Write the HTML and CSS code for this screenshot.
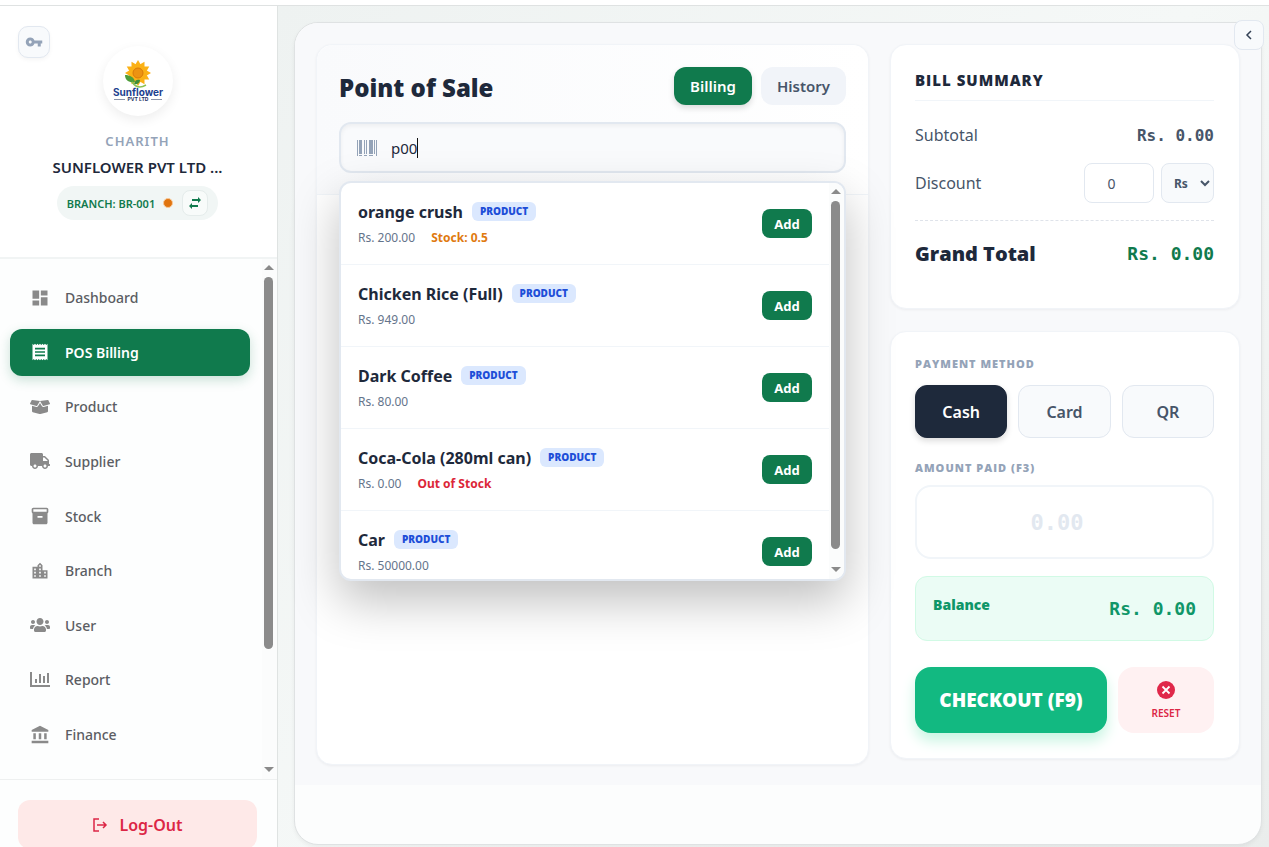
FILE: index.html
```html
<!DOCTYPE html>
<html lang="en">
<head>
    <meta charset="UTF-8">
    <meta name="viewport" content="width=device-width, initial-scale=1.0">
    <title>POS Billing</title>
    <link rel="stylesheet" href="styles.css">
</head>
<body>
    <div class="topbar"></div>
    <div class="layout">
        <aside class="sidebar">
            <div class="profile">
                <button class="key-button" aria-label="Change password">
                    <svg viewBox="0 0 24 24" width="18" height="18"><path d="M12.65 10A5.99 5.99 0 0 0 7 6c-3.31 0-6 2.69-6 6s2.69 6 6 6a5.99 5.99 0 0 0 5.65-4H17v4h4v-4h2v-4H12.65zM7 14c-1.1 0-2-.9-2-2s.9-2 2-2 2 .9 2 2-.9 2-2 2z"/></svg>
                </button>
                <div class="logo">
                    <svg viewBox="0 0 70 70" width="70" height="70">
                        <g fill="#fbb116">
                            <path id="petal" d="M35 29L31.500 20L35 14L38.500 20Z"/>
                            <use href="#petal" transform="rotate(30 35 27)"/>
                            <use href="#petal" transform="rotate(60 35 27)"/>
                            <use href="#petal" transform="rotate(90 35 27)"/>
                            <use href="#petal" transform="rotate(120 35 27)"/>
                            <use href="#petal" transform="rotate(150 35 27)"/>
                            <use href="#petal" transform="rotate(180 35 27)"/>
                            <use href="#petal" transform="rotate(210 35 27)"/>
                            <use href="#petal" transform="rotate(240 35 27)"/>
                            <use href="#petal" transform="rotate(270 35 27)"/>
                            <use href="#petal" transform="rotate(300 35 27)"/>
                            <use href="#petal" transform="rotate(330 35 27)"/>
                        </g>
                        <circle cx="35" cy="27" r="8" fill="#fbb116"/>
                        <circle cx="35" cy="27" r="5" fill="#ec9312" stroke="#d97a0a"/>
                        <path d="M22 29c5 0 9 2 10 7c-5 1-10-1-10-7z" fill="#4f9d3a"/>
                        <path d="M31 38c1-4 3-5 6-4c0 3-3 5-6 4z" fill="#3d8d3a"/>
                        <path d="M29 36c4 6 9 6 14 3" fill="none" stroke="#8cc152" stroke-width="1.500"/>
                        <text x="35" y="50" text-anchor="middle" class="logo-name">Sunflower</text>
                        <path d="M11 53.500h11M48 53.500h11" stroke="#8a93a8"/>
                        <text x="35" y="55" text-anchor="middle" class="logo-sub">PVT LTD</text>
                    </svg>
                </div>
                <div class="user-name">CHARITH</div>
                <div class="company">SUNFLOWER PVT LTD ...</div>
                <div class="branch-pill">
                    <span>BRANCH: BR-001</span>
                    <i class="dot"></i>
                    <button class="swap-button" aria-label="Switch branch">
                        <svg viewBox="0 0 14 14" width="14" height="14"><path d="M10 1l3 3-3 3V5H4V3h6zM4 7L1 10l3 3v-2h6V9H4z"/></svg>
                    </button>
                </div>
            </div>
            <div class="nav-wrap">
                <nav class="nav">
                    <a href="#"><svg viewBox="0 0 24 24" width="20" height="20"><path d="M3 13h8V3H3v10zm0 8h8v-6H3v6zm10 0h8V11h-8v10zm0-18v6h8V3h-8z"/></svg>Dashboard</a>
                    <a href="#" class="active"><svg viewBox="0 0 24 24" width="20" height="20"><path d="M18 17H6v-2h12v2zm0-4H6v-2h12v2zm0-4H6V7h12v2zM3 22l1.500-1.500L6 22l1.500-1.500L9 22l1.500-1.500L12 22l1.500-1.500L15 22l1.500-1.500L18 22l1.500-1.500L21 22V2l-1.500 1.500L18 2l-1.500 1.500L15 2l-1.500 1.500L12 2l-1.500 1.500L9 2 7.500 3.500 6 2 4.500 3.500 3 2v20z"/></svg>POS Billing</a>
                    <a href="#"><svg viewBox="0 0 640 512" width="20" height="16"><path d="M425.700 256c-16.900 0-32.800-9-41.400-23.400L320 126l-64.200 106.600c-8.700 14.500-24.600 23.500-41.500 23.500-4.500 0-9-.6-13.300-1.900L64 215v178c0 14.700 10 27.500 24.200 31l216.200 54.100c10.200 2.500 20.900 2.500 31 0L551.800 424c14.200-3.600 24.200-16.400 24.200-31V215l-137 39.100c-4.300 1.300-8.800 1.900-13.300 1.900zm212.600-112.200L586.800 41c-3.100-6.200-9.800-9.800-16.700-8.900L320 64l91.700 152.100c3.800 6.300 11.400 9.300 18.500 7.300l197.900-56.500c9.900-2.900 14.700-13.900 10.200-23.100zM53.200 41L1.700 143.800c-4.600 9.200.3 20.200 10.100 23l197.900 56.500c7.100 2 14.700-1 18.500-7.300L320 64 69.800 32.100c-6.900-.8-13.500 2.700-16.600 8.900z"/></svg>Product</a>
                    <a href="#"><svg viewBox="0 0 640 512" width="20" height="16"><path d="M624 352h-16V243.900c0-12.700-5.100-24.900-14.100-33.900L494 110.100c-9-9-21.200-14.100-33.900-14.100H416V48c0-26.500-21.500-48-48-48H48C21.500 0 0 21.500 0 48v320c0 26.500 21.500 48 48 48h16c0 53 43 96 96 96s96-43 96-96h128c0 53 43 96 96 96s96-43 96-96h48c8.800 0 16-7.200 16-16v-32c0-8.800-7.200-16-16-16zM160 464c-26.500 0-48-21.500-48-48s21.500-48 48-48 48 21.500 48 48-21.500 48-48 48zm320 0c-26.500 0-48-21.500-48-48s21.500-48 48-48 48 21.500 48 48-21.500 48-48 48zm80-208H416V144h44.100l99.900 99.900V256z"/></svg>Supplier</a>
                    <a href="#"><svg viewBox="0 0 24 24" width="20" height="20"><path fill-rule="evenodd" d="M4 2h16c1 0 2 1 2 2v3c0 1-.5 1.500-1 2v11c0 1-1 2-2 2H5c-1 0-2-1-2-2V9c-.5-.5-1-1-1-2V4c0-1 1-2 2-2zm0 2v3h16V4H4zm5 8v2h6v-2H9z"/></svg>Stock</a>
                    <a href="#"><svg viewBox="0 0 24 24" width="20" height="20"><path d="M15 11V5l-3-3-3 3v2H3v14h18V11h-6zm-8 8H5v-2h2v2zm0-4H5v-2h2v2zm0-4H5V9h2v2zm6 8h-2v-2h2v2zm0-4h-2v-2h2v2zm0-4h-2V9h2v2zm0-4h-2V5h2v2zm6 12h-2v-2h2v2zm0-4h-2v-2h2v2z"/></svg>Branch</a>
                    <a href="#"><svg viewBox="0 0 640 512" width="20" height="16"><path d="M96 224c35.300 0 64-28.700 64-64s-28.700-64-64-64-64 28.700-64 64 28.700 64 64 64zm448 0c35.300 0 64-28.700 64-64s-28.700-64-64-64-64 28.700-64 64 28.700 64 64 64zm32 32h-64c-17.600 0-33.500 7.100-45.100 18.600 40.300 22.100 68.900 62 75.100 109.400h66c17.700 0 32-14.300 32-32v-32c0-35.300-28.700-64-64-64zm-256 0c61.900 0 112-50.100 112-112S381.900 32 320 32 208 82.100 208 144s50.100 112 112 112zm76.800 32h-8.300c-20.800 10-43.900 16-68.500 16s-47.600-6-68.500-16h-8.300C179.600 288 128 339.600 128 403.200V432c0 26.500 21.500 48 48 48h288c26.500 0 48-21.500 48-48v-28.800c0-63.600-51.600-115.200-115.200-115.200zm-223.700-13.400C161.500 263.100 145.600 256 128 256H64c-35.300 0-64 28.700-64 64v32c0 17.700 14.300 32 32 32h65.900c6.300-47.400 34.900-87.300 75.200-109.400z"/></svg>User</a>
                    <a href="#"><svg viewBox="0 0 20 20" width="20" height="20"><path d="M0 2h2v13h18v2H0zM5 9h2v4H5zM9 4h2v9H9zM13 6h2v7h-2zM17 3h2v10h-2z"/></svg>Report</a>
                    <a href="#"><svg viewBox="0 0 24 24" width="20" height="20"><path d="M4 10v7h3v-7H4zm6.500 0v7h3v-7h-3zM2 22h20v-3H2v3zM17 10v7h3v-7h-3zM12 1L2 6v2h20V6L12 1z"/></svg>Finance</a>
                </nav>
                <div class="scrollbar">
                    <i class="arrow-up"></i>
                    <div class="track"><div class="thumb"></div></div>
                    <i class="arrow-down"></i>
                </div>
            </div>
            <div class="sidebar-footer">
                <button class="logout">
                    <svg viewBox="0 0 16 16" width="16" height="16" fill="none" stroke="#dc2645" stroke-width="1.500"><path d="M7 2H2v12h5M5 8h9M11 5l3 3-3 3"/></svg>
                    Log-Out
                </button>
            </div>
        </aside>

        <main class="main">
            <div class="panel">
                <button class="collapse" aria-label="Collapse">
                    <svg viewBox="0 0 8 10" width="8" height="10" fill="none" stroke="#334155" stroke-width="1.500"><path d="M6 1L2 5l4 4"/></svg>
                </button>
                <div class="pos">
                    <section class="card sale">
                        <header class="sale-header">
                            <div class="title-row">
                                <h1>Point of Sale</h1>
                                <div class="tabs">
                                    <button class="tab tab-active">Billing</button>
                                    <button class="tab">History</button>
                                </div>
                            </div>
                            <div class="search">
                                <svg viewBox="0 0 20 16" width="20" height="16" fill="#94a3b8"><path d="M0 0h1v16H0zM2 0h3v14H2zM7 0h1v14H7zM9 0h1v14H9zM12 0h4v14h-4zM17 0h1v14h-1zM19 0h1v16h-1zM2 15h3v1H2zM7 15h3v1H7zM12 15h4v1h-4z"/></svg>
                                <input type="text" value="p00" aria-label="Search products">
                                <i class="caret"></i>
                                <div class="results">
                                    <div class="result-list">
                                        <div class="result">
                                            <div>
                                                <div class="name">orange crush <span class="badge">PRODUCT</span></div>
                                                <div class="price">Rs. 200.00 <b class="low">Stock: 0.5</b></div>
                                            </div>
                                            <button class="add">Add</button>
                                        </div>
                                        <div class="result">
                                            <div>
                                                <div class="name">Chicken Rice (Full) <span class="badge">PRODUCT</span></div>
                                                <div class="price">Rs. 949.00</div>
                                            </div>
                                            <button class="add">Add</button>
                                        </div>
                                        <div class="result">
                                            <div>
                                                <div class="name">Dark Coffee <span class="badge">PRODUCT</span></div>
                                                <div class="price">Rs. 80.00</div>
                                            </div>
                                            <button class="add">Add</button>
                                        </div>
                                        <div class="result">
                                            <div>
                                                <div class="name">Coca-Cola (280ml can) <span class="badge">PRODUCT</span></div>
                                                <div class="price">Rs. 0.00 <b class="out">Out of Stock</b></div>
                                            </div>
                                            <button class="add">Add</button>
                                        </div>
                                        <div class="result">
                                            <div>
                                                <div class="name">Car <span class="badge">PRODUCT</span></div>
                                                <div class="price">Rs. 50000.00</div>
                                            </div>
                                            <button class="add">Add</button>
                                        </div>
                                    </div>
                                    <div class="scrollbar">
                                        <i class="arrow-up"></i>
                                        <div class="track"><div class="thumb thumb-long"></div></div>
                                        <i class="arrow-down"></i>
                                    </div>
                                </div>
                            </div>
                        </header>
                    </section>

                    <div class="side">
                        <section class="card summary">
                            <h2>BILL SUMMARY</h2>
                            <div class="line">
                                <span>Subtotal</span>
                                <span class="mono">Rs. 0.00</span>
                            </div>
                            <div class="line discount">
                                <label for="discount">Discount</label>
                                <div class="discount-fields">
                                    <input id="discount" type="number" value="0">
                                    <select aria-label="Discount type">
                                        <option>Rs</option>
                                        <option>%</option>
                                    </select>
                                </div>
                            </div>
                            <div class="line total">
                                <span>Grand Total</span>
                                <span class="mono">Rs. 0.00</span>
                            </div>
                        </section>

                        <section class="card payment">
                            <h3>PAYMENT METHOD</h3>
                            <div class="methods">
                                <button class="method method-active">Cash</button>
                                <button class="method">Card</button>
                                <button class="method">QR</button>
                            </div>
                            <label class="amount-label" for="amount">AMOUNT PAID (F3)</label>
                            <input id="amount" class="amount mono" type="number" placeholder="0.00">
                            <div class="balance">
                                <b>Balance</b>
                                <span class="mono">Rs. 0.00</span>
                            </div>
                            <div class="actions">
                                <button class="checkout">CHECKOUT (F9)</button>
                                <button class="reset">
                                    <svg viewBox="0 0 18 18" width="18" height="18"><circle cx="9" cy="9" r="9" fill="#e0284a"/><path d="M5.500 5.500l7 7M12.500 5.500l-7 7" stroke="#fff" stroke-width="1.800"/></svg>
                                    RESET
                                </button>
                            </div>
                        </section>
                    </div>
                </div>
            </div>
        </main>
    </div>
</body>
</html>
```
FILE: styles.css
```css
* {
    box-sizing: border-box;
}
body {
    margin: 0;
    height: 100vh;
    display: flex;
    flex-direction: column;
    overflow: hidden;
    font-family: "Noto Sans", "Open Sans", sans-serif;
    color: #1e293b;
    background: #fff;
}
button, input, select {
    font-family: inherit;
    margin: 0;
}
button {
    border: 0;
    padding: 0;
    cursor: pointer;
}
svg {
    flex-shrink: 0;
}
.mono {
    font-family: "DejaVu Sans Mono", monospace;
}
.topbar {
    height: 6px;
    flex-shrink: 0;
    border-bottom: 1px solid #dfe2e2;
}
.layout {
    flex: 1;
    min-height: 0;
    display: flex;
}

/* Sidebar */
.sidebar {
    width: 278px;
    flex-shrink: 0;
    display: flex;
    flex-direction: column;
    border-right: 1px solid #dfe3e2;
    background: #fdfefe;
}
.profile {
    position: relative;
    height: 253px;
    flex-shrink: 0;
    display: flex;
    flex-direction: column;
    align-items: center;
    padding: 40px 20px 0 18px;
    border-bottom: 2px solid #f1f4f4;
    background: #fff;
}
.key-button {
    position: absolute;
    top: 20px;
    left: 18px;
    width: 32px;
    height: 32px;
    display: grid;
    place-items: center;
    border: 1px solid #e2e8f0;
    border-radius: 10px;
    background: #f8fafc;
    fill: #94a3b8;
    box-shadow: 0 2px 4px rgba(0, 0, 0, 0.04);
}
.logo {
    width: 70px;
    height: 70px;
    border-radius: 50%;
    background: #fff;
    box-shadow: 0 4px 12px rgba(0, 0, 0, 0.07);
}
.logo-name {
    font: bold 10px Inter, sans-serif;
    fill: #1d3f8f;
}
.logo-sub {
    font: bold 5px Inter, sans-serif;
    fill: #1d2f5f;
}
.user-name {
    margin-top: 15px;
    font-size: 13px;
    line-height: 20px;
    font-weight: 600;
    letter-spacing: 1px;
    color: #94a3b8;
}
.company {
    margin-top: 4px;
    font-size: 15px;
    line-height: 24px;
    font-weight: 600;
}
.branch-pill {
    display: flex;
    align-items: center;
    height: 34px;
    margin-top: 7px;
    padding: 0 10px;
    border-radius: 17px;
    background: #f1f6f5;
    font-size: 11px;
    font-weight: 600;
    color: #107a4d;
}
.dot {
    width: 10px;
    height: 10px;
    margin: 0 9px 0 8px;
    border: 1px solid #f9c999;
    border-radius: 50%;
    background: #e0740f;
}
.swap-button {
    width: 26px;
    height: 26px;
    display: grid;
    place-items: center;
    border: 1px solid #e5eceb;
    border-radius: 8px;
    background: #f8fbfa;
    fill: #107a4d;
}
.nav-wrap {
    flex: 1;
    min-height: 0;
    display: flex;
}
.nav {
    flex: 1;
    display: flex;
    flex-direction: column;
    justify-content: space-between;
    padding: 15px 12px 21px 10px;
}
.nav a {
    display: flex;
    align-items: center;
    gap: 15px;
    height: 47px;
    padding: 0 20px;
    border-radius: 12px;
    font-size: 14px;
    font-weight: 500;
    color: #5b5d63;
    fill: #8a8a8a;
    text-decoration: none;
}
.nav .active {
    background: #107a4d;
    color: #fff;
    fill: #fff;
    font-weight: 600;
    box-shadow: 0 4px 12px rgba(16, 122, 77, 0.22);
}
.scrollbar {
    width: 15px;
    display: flex;
    flex-direction: column;
    align-items: center;
    padding: 6px 2px 7px 0;
    background: #fbfcfc;
}
.arrow-up, .arrow-down {
    border: 5px solid transparent;
    border-top-width: 0;
    border-bottom: 5px solid #8a8a8a;
}
.arrow-down {
    transform: rotate(180deg);
}
.track {
    flex: 1;
    width: 9px;
    margin: 7px 0;
}
.thumb {
    height: 77%;
    border-radius: 5px;
    background: #8b8b8b;
}
.thumb-long {
    height: 97%;
}
.sidebar-footer {
    flex-shrink: 0;
    height: 68px;
    padding: 20px 20px 0 18px;
    border-top: 1px solid #eef0f0;
    overflow: hidden;
}
.logout {
    width: 100%;
    height: 49px;
    display: flex;
    align-items: center;
    justify-content: center;
    gap: 11px;
    border-radius: 12px;
    background: #fee9e8;
    color: #dc2645;
    font-size: 16px;
    font-weight: 600;
}

/* Main panel */
.main {
    flex: 1;
    min-width: 0;
    padding: 16px 7px 2px 16px;
    background: linear-gradient(135deg, #eef2f1, #f5f8f7 50%, #eaedec);
}
.panel {
    position: relative;
    height: 100%;
    border: 1px solid #dfe2e3;
    border-radius: 24px;
    background: #fcfdfd;
    box-shadow: 0 2px 4px rgba(0, 0, 0, 0.05);
}
.collapse {
    position: absolute;
    top: -3px;
    right: -3px;
    width: 30px;
    height: 30px;
    display: grid;
    place-items: center;
    border: 1px solid #e2e8f0;
    border-radius: 8px;
    background: #f8fafc;
}
.pos {
    display: grid;
    grid-template-columns: 1fr 350px;
    align-items: start;
    gap: 21px;
    padding: 21px 21px 20px;
    border-radius: 23px 23px 0 0;
    background: #f8f9fb;
}
.card {
    border: 1px solid #f1f4f8;
    border-radius: 16px;
    background: #fff;
    box-shadow: 0 1px 3px rgba(15, 23, 42, 0.05);
}
.sale {
    min-height: 721px;
}
.sale-header {
    padding: 22px 22px 21px;
    border-bottom: 1px solid #f1f5f9;
    border-radius: 16px 16px 0 0;
    background: linear-gradient(90deg, #f9fafc, #fff);
}
.title-row {
    display: flex;
    align-items: flex-start;
    justify-content: space-between;
    margin-bottom: 13px;
}
h1, h2, h3, .amount-label, .total, .badge, .checkout, .balance b {
    font-family: "Open Sans", "Noto Sans", sans-serif;
    font-weight: 800;
}
h1 {
    margin: 0;
    font-size: 24px;
    line-height: 42px;
}
.tabs {
    display: flex;
    gap: 9px;
}
.tab {
    height: 38px;
    padding: 0 16px;
    border-radius: 12px;
    background: #f1f4f9;
    color: #475569;
    font-size: 15px;
    font-weight: 600;
}
.tab-active {
    background: #107a4d;
    color: #fff;
    box-shadow: 0 3px 6px rgba(0, 0, 0, 0.14);
}
.search {
    position: relative;
    display: flex;
    align-items: center;
    height: 51px;
    padding-left: 16px;
    border: 2px solid #e2e8f0;
    border-radius: 12px;
    background: #f9fafc;
    box-shadow: inset 0 2px 4px rgba(0, 0, 0, 0.05);
}
.search input {
    field-sizing: content;
    margin-left: 14px;
    padding: 0;
    border: 0;
    outline: 0;
    background: none;
    font-size: 15px;
    color: #1e293b;
}
.caret {
    width: 1px;
    height: 20px;
    background: #111;
}

/* Search results */
.results {
    position: absolute;
    top: 57px;
    left: -2px;
    right: -2px;
    z-index: 5;
    height: 400px;
    display: flex;
    overflow: hidden;
    border: 2px solid #e2e8f0;
    border-radius: 12px;
    background: #fff;
    box-shadow: 0 20px 48px rgba(0, 0, 0, 0.25);
}
.result-list {
    flex: 1;
}
.result {
    display: flex;
    align-items: center;
    justify-content: space-between;
    height: 82px;
    padding: 0 17px;
    border-bottom: 1px solid #f1f5f9;
}
.name {
    display: flex;
    align-items: center;
    gap: 9px;
    font-size: 16px;
    line-height: 28px;
    font-weight: 700;
}
.badge {
    padding: 0 8px;
    border-radius: 6px;
    background: #dbe8fe;
    color: #1d4ed8;
    font-size: 10px;
    line-height: 19px;
}
.price {
    font-size: 12px;
    line-height: 24px;
    color: #64748b;
}
.price b {
    margin-left: 13px;
    font-weight: 700;
}
.low {
    color: #e07a10;
}
.out {
    color: #dc2638;
}
.add {
    width: 50px;
    height: 29px;
    border-radius: 8px;
    background: #107a4d;
    color: #fff;
    font-size: 13px;
    font-weight: 700;
}

/* Bill summary */
.side {
    display: flex;
    flex-direction: column;
    gap: 22px;
}
.summary {
    height: 265px;
    padding: 24px 25px 0 24px;
}
h2 {
    margin: 0 0 14px;
    padding-bottom: 9px;
    border-bottom: 1px solid #f1f5f9;
    font-size: 15px;
    line-height: 22px;
    letter-spacing: 1px;
}
.line {
    display: flex;
    align-items: center;
    justify-content: space-between;
    height: 40px;
    font-size: 16px;
    color: #475569;
}
.line .mono {
    font-weight: 700;
}
.discount {
    height: 66px;
    padding: 8px 0 17px;
    border-bottom: 1px dashed #dfe3ea;
}
.discount-fields {
    display: flex;
    gap: 7px;
}
.discount-fields input {
    width: 70px;
    height: 40px;
    padding: 0 8px;
    border: 1px solid #e2e8f0;
    border-radius: 8px;
    font-size: 14px;
    color: #475569;
    text-align: center;
}
.discount-fields select {
    width: 53px;
    height: 40px;
    padding: 0 0 0 8px;
    border: 1px solid #e2e8f0;
    border-radius: 8px;
    background: #f8fafc;
    font-size: 12px;
    font-weight: 700;
    color: #475569;
}
.total {
    height: 64px;
    font-size: 20px;
    color: #1e293b;
}
.total .mono {
    font-size: 18px;
    color: #107a4d;
}

/* Payment */
.payment {
    padding: 23px 25px 25px 24px;
}
h3, .amount-label {
    display: block;
    margin: 0;
    font-size: 11px;
    line-height: 18px;
    letter-spacing: 1px;
    color: #94a3b8;
}
.methods {
    display: grid;
    grid-template-columns: repeat(3, 1fr);
    gap: 11px;
    margin: 12px 0 21px;
}
.method {
    height: 53px;
    border: 1px solid #e2e8f0;
    border-radius: 12px;
    background: #f8fafc;
    color: #475569;
    font-size: 16px;
    font-weight: 600;
}
.method-active {
    border-color: #1e293b;
    background: #1e293b;
    color: #fff;
    box-shadow: 0 3px 6px rgba(0, 0, 0, 0.14);
}
.amount {
    width: 100%;
    height: 74px;
    margin: 8px 0 17px;
    border: 2px solid #f1f5f9;
    border-radius: 16px;
    padding: 0 16px;
    font-size: 22px;
    font-weight: 700;
    text-align: center;
}
.amount::placeholder {
    color: #e2e8f0;
}
.balance {
    display: flex;
    justify-content: space-between;
    height: 65px;
    padding: 17px;
    border: 1px solid #d1fae5;
    border-radius: 12px;
    background: #ebfcf5;
    color: #0f9668;
    font-size: 14px;
    line-height: 22px;
}
.balance .mono {
    font-size: 18px;
    line-height: 30px;
    font-weight: 700;
}
.actions {
    display: grid;
    grid-template-columns: 2fr 1fr;
    gap: 11px;
    margin-top: 26px;
}
.actions button {
    height: 66px;
    border-radius: 16px;
}
.checkout {
    background: #12b981;
    color: #fff;
    font-size: 19px;
    box-shadow: 0 8px 14px #c8f5e2;
}
.reset {
    display: flex;
    flex-direction: column;
    align-items: center;
    justify-content: center;
    gap: 7px;
    background: #fff1f2;
    color: #dc2645;
    font-size: 10px;
    font-weight: 600;
}
```
